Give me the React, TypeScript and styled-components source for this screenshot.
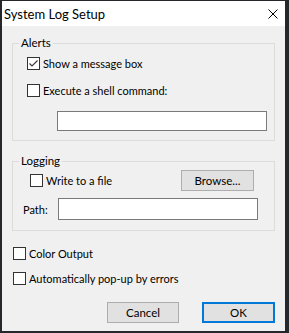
import React from "react";
import styled, { createGlobalStyle } from "styled-components";

const Global = createGlobalStyle`
  html, body { margin: 0; padding: 0; }
  body {
    background: #26272b;
    width: 289px;
    height: 333px;
    overflow: hidden;
    font-family: Lato, "Noto Sans", sans-serif;
    color: #000;
  }
`;

const Window = styled.div`
  margin: 1px 0 0 2px;
  width: 283px;
  height: 330px;
  background: #f0f0f0;
  display: flex;
  flex-direction: column;
`;

const TitleBar = styled.div`
  height: 25px;
  background: #fff;
  display: flex;
  align-items: center;
  justify-content: space-between;
  padding: 0 7px 0 2px;
  flex-shrink: 0;
`;

const Title = styled.span`
  font-size: 13px;
`;

const Body = styled.div`
  flex: 1;
  padding: 9px 10px 8px 10px;
  display: flex;
  flex-direction: column;
`;

const Group = styled.fieldset<{ $top?: number; $bottom: number }>`
  margin: ${(p) => p.$top ?? 0}px 0 0 0;
  padding: 0 0 ${(p) => p.$bottom}px 0;
  border: 1px solid #dcdcdc;
  min-inline-size: 0;
  display: flex;
  flex-direction: column;
`;

const Legend = styled.legend`
  margin-left: 6px;
  padding: 0 2px;
  font-size: 11.5px;
  line-height: 16px;
`;

const Row = styled.div<{ $top: number; $indent: number; $height: number; $right?: number }>`
  display: flex;
  align-items: center;
  margin-top: ${(p) => p.$top}px;
  padding-left: ${(p) => p.$indent}px;
  padding-right: ${(p) => p.$right ?? 0}px;
  height: ${(p) => p.$height}px;
  font-size: 11px;
`;

const Box = styled.span`
  width: 13px;
  height: 13px;
  box-sizing: border-box;
  border: 1px solid #333;
  background: #fff;
  display: inline-flex;
  flex-shrink: 0;
`;

const CheckText = styled.span`
  margin-left: 3px;
  line-height: 15px;
  white-space: nowrap;
`;

const TextInput = styled.div<{ $left: number; $width: number; $height: number }>`
  margin-left: ${(p) => p.$left}px;
  width: ${(p) => p.$width}px;
  height: ${(p) => p.$height}px;
  box-sizing: border-box;
  border: 1px solid #7a7a7a;
  background: #fff;
`;

const FieldLabel = styled.span`
  width: 35px;
  flex-shrink: 0;
`;

const Button = styled.div<{ $default?: boolean; $width: number }>`
  width: ${(p) => p.$width}px;
  height: 21px;
  box-sizing: border-box;
  background: #e1e1e1;
  border: ${(p) => (p.$default ? "2px solid #0078d7" : "1px solid #adadad")};
  display: flex;
  align-items: center;
  justify-content: center;
  font-size: 11.5px;
`;

const PushRight = styled.div`
  margin-left: auto;
`;

const ButtonRow = styled.div`
  margin-top: auto;
  display: flex;
  justify-content: flex-end;
  gap: 23px;
`;

const Check = ({ checked, label }: { checked?: boolean; label: string }) => (
  <>
    <Box>
      {checked && (
        <svg width="11" height="11" viewBox="0 0 11 11">
          <path d="M1.5 5.5 L4 8 L9.5 2.5" fill="none" stroke="#3c3c3c" strokeWidth="1.2" />
        </svg>
      )}
    </Box>
    <CheckText>{label}</CheckText>
  </>
);

export default function App() {
  return (
    <>
      <Global />
      <Window>
        <TitleBar>
          <Title>System Log Setup</Title>
          <svg width="10" height="10" viewBox="0 0 10 10">
            <path d="M0.5 0.5 L9.5 9.5 M9.5 0.5 L0.5 9.5" stroke="#000" strokeWidth="1" />
          </svg>
        </TitleBar>
        <Body>
          <Group $bottom={9}>
            <Legend>Alerts</Legend>
            <Row $top={5} $indent={14} $height={15}>
              <Check checked label="Show a message box" />
            </Row>
            <Row $top={12} $indent={14} $height={15}>
              <Check label="Execute a shell command:" />
            </Row>
            <Row $top={13} $indent={0} $height={20}>
              <TextInput $left={44} $width={210} $height={20} />
            </Row>
          </Group>
          <Group $top={12} $bottom={10}>
            <Legend>Logging</Legend>
            <Row $top={1} $indent={17} $height={21} $right={20}>
              <Check label="Write to a file" />
              <PushRight>
                <Button $width={73}>Browse...</Button>
              </PushRight>
            </Row>
            <Row $top={7} $indent={10} $height={22}>
              <FieldLabel>Path:</FieldLabel>
              <TextInput $left={0} $width={200} $height={22} />
            </Row>
          </Group>
          <Row $top={15} $indent={1} $height={15}>
            <Check label="Color Output" />
          </Row>
          <Row $top={10} $indent={1} $height={15}>
            <Check label="Automatically pop-up by errors" />
          </Row>
          <ButtonRow>
            <Button $width={72}>Cancel</Button>
            <Button $width={73} $default>
              OK
            </Button>
          </ButtonRow>
        </Body>
      </Window>
    </>
  );
}
